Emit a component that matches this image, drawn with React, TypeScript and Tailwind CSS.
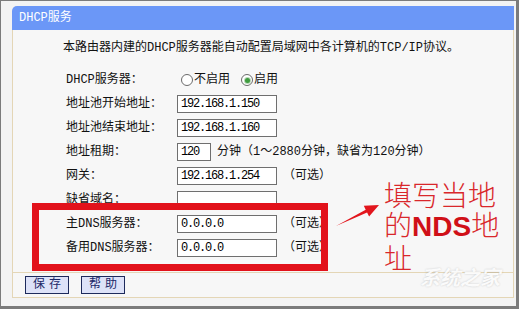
const ui = "font-['Liberation_Mono','Noto_Sans_CJK_SC',monospace]";

function Row({ label, children }: { label: string; children?: React.ReactNode }) {
  return (
    <div className="flex h-[24px] items-center pl-[3px]">
      <div className="w-[111px] shrink-0">{label}</div>
      <div className="flex items-center">{children}</div>
    </div>
  );
}

function Field({ value = '', w = 'w-[100px]' }: { value?: string; w?: string }) {
  return (
    <div className={`${w} h-[18px] border border-[#6f6f6f] bg-white px-[3px] text-[12px] leading-[16px] tracking-[-1.2px] text-black`}>
      {value}
    </div>
  );
}

function Radio({ checked, label }: { checked?: boolean; label: string }) {
  return (
    <div className="flex items-center">
      <span className="flex h-[12px] w-[12px] items-center justify-center rounded-full border border-[#6b6b6b] bg-white">
        {checked && <span className="h-[5px] w-[5px] rounded-full bg-[#3f9c3f] ring-1 ring-[#b8d8b8]" />}
      </span>
      <span className="ml-[1px]">{label}</span>
    </div>
  );
}

function Btn({ children }: { children: React.ReactNode }) {
  return (
    <div className="flex h-[18px] w-[44px] items-center justify-center border border-[#1d2a5c] bg-[#dde2f8] text-[12px] tracking-[4px] text-[#1b2868] pl-[4px]">
      {children}
    </div>
  );
}

export default function App() {
  return (
    <div className={`relative h-[309px] w-[519px] overflow-hidden border-t border-l border-r-[3px] border-b-[3px] border-[#7b7b7b] bg-[#f3f3f3] pt-[5px] pl-[11px] ${ui} text-[12px] leading-[16px] text-[#111]`}>
      <div className="w-[502px] overflow-hidden rounded-tl-[5px]">
        <div className="flex h-[24px] items-center bg-[#6b97f7] pl-[7px] text-white">DHCP服务</div>
        <div className="border-x border-b border-[#e4d6b6] bg-[#f7f7f7]">
          <div className="pt-[10px] pb-[12px] pl-[50px]">
            <div className="mb-[12px] whitespace-nowrap">本路由器内建的DHCP服务器能自动配置局域网中各计算机的TCP/IP协议。</div>
            <Row label="DHCP服务器：">
              <div className="ml-[4px] flex items-center gap-[11px]">
                <Radio label="不启用" />
                <Radio checked label="启用" />
              </div>
            </Row>
            <Row label="地址池开始地址："><Field value="192.168.1.150" /></Row>
            <Row label="地址池结束地址："><Field value="192.168.1.160" /></Row>
            <Row label="地址租期：">
              <Field value="120" w="w-[34px]" />
              <span className="ml-[6px] whitespace-nowrap">分钟（1～2880分钟，缺省为120分钟）</span>
            </Row>
            <Row label="网关：">
              <Field value="192.168.1.254" />
              <span className="ml-[6px]">（可选）</span>
            </Row>
            <Row label="缺省域名："><Field /></Row>
            <Row label="主DNS服务器：">
              <Field value="0.0.0.0" />
              <span className="ml-[6px]">（可选）</span>
            </Row>
            <Row label="备用DNS服务器：">
              <Field value="0.0.0.0" />
              <span className="ml-[6px]">（可选）</span>
            </Row>
          </div>
          <div className="flex h-[25px] items-center gap-[12px] border-t border-[#e4d6b6] pl-[12px]">
            <Btn>保存</Btn>
            <Btn>帮助</Btn>
          </div>
        </div>
      </div>

      {/* annotation */}
      <div className="absolute left-[31px] top-[202px] h-[68px] w-[296px] border-[7px] border-[#e2121b]" />
      <svg className="absolute left-0 top-0" width="519" height="309" viewBox="1 1 519 309">
        <polygon points="336,226 365.7,209.8 363.8,205.7 379,205 369.1,216.5 367.1,212.4" fill="#e2161d" />
      </svg>
      <div className="absolute left-[383px] top-[178px] whitespace-nowrap font-['Noto_Sans_CJK_SC',sans-serif] text-[28px] leading-[30px] font-light text-[#d9272b]">
        <div>填写当地</div>
        <div>的<span className="font-['Liberation_Sans',sans-serif] font-bold text-[#d01018]">NDS</span>地</div>
        <div>址</div>
      </div>
      <div className="absolute left-[419px] top-[264px] font-['Noto_Sans_CJK_SC',sans-serif] text-[20px] font-bold italic leading-[24px] text-white/90 [text-shadow:0_0_2px_rgba(0,0,0,0.2)]">
        系统之家
      </div>
    </div>
  );
}
